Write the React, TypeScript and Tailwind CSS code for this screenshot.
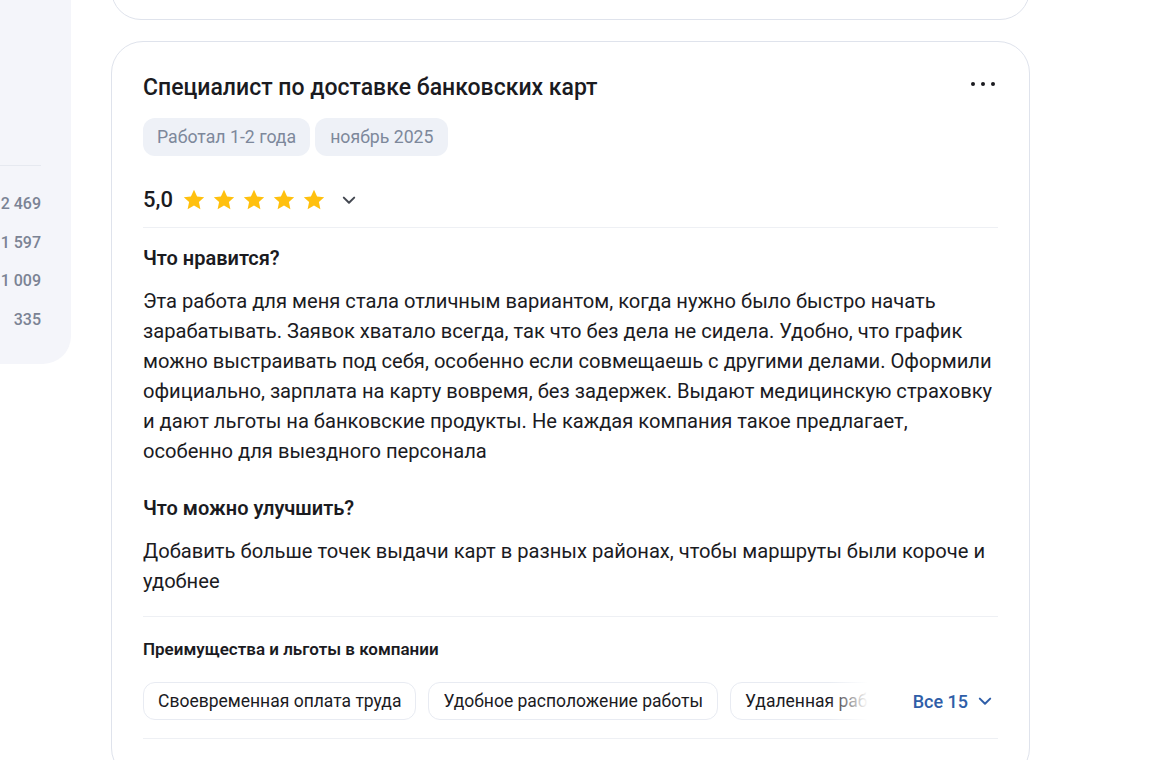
import React from 'react';

const counts = ['2 469', '1 597', '1 009', '335'];
const benefits = ['Своевременная оплата труда', 'Удобное расположение работы', 'Удаленная работа', 'Гибкий график'];

const Star: React.FC = () => (
    <svg width="24" height="24" viewBox="0 0 24 24" className="shrink-0">
        <path d="M12 1.8l3.1 6.6 7.1.8-5.3 4.9 1.5 7.1L12 17.6l-6.4 3.6 1.5-7.1L1.8 9.2l7.1-.8z" fill="#ffc00e" />
    </svg>
);

const Chevron: React.FC<{ className?: string }> = ({ className }) => (
    <svg width="14" height="14" viewBox="0 0 14 14" className={className}>
        <path d="M1.8 4.6l5.2 5.2 5.2-5.2" fill="none" stroke="currentColor" strokeWidth="2" strokeLinecap="round" strokeLinejoin="round" />
    </svg>
);

const App: React.FC = () => {
    return (
        <div className="min-h-[760px] w-[1173px] bg-white flex items-start overflow-hidden font-['Roboto',sans-serif] text-[#1b1b1f]">
            {/* sidebar stub */}
            <div className="w-[71px] shrink-0 -mt-[40px] h-[404px] bg-[#f4f5fa] rounded-r-[28px] pr-[30px] pt-[205px]">
                <div className="h-px bg-[#e6e9f0]" />
                <div className="flex flex-col items-end pt-[26px] gap-[14.5px]">
                    {counts.map((c) => (
                        <div key={c} className="text-[16px] leading-[24px] font-medium text-[#7b8394] whitespace-nowrap">{c}</div>
                    ))}
                </div>
            </div>

            <div className="ml-[40px] w-[919px] shrink-0 flex flex-col">
                <div className="-mt-[40px] h-[60px] border border-[#dfe3ec] rounded-[32px] bg-white" />

                <div className="mt-[21px] border border-[#dfe3ec] rounded-[32px] bg-white px-[31px] pt-[32px]">
                    <div className="flex items-start justify-between">
                        <h2 className="text-[23px] leading-[28px] font-medium">Специалист по доставке банковских карт</h2>
                        <div className="flex gap-[6px] mt-[8px] mr-[3px]">
                            <span className="w-[4px] h-[4px] rounded-full bg-[#1b1b1f]" />
                            <span className="w-[4px] h-[4px] rounded-full bg-[#1b1b1f]" />
                            <span className="w-[4px] h-[4px] rounded-full bg-[#1b1b1f]" />
                        </div>
                    </div>

                    <div className="flex gap-[5px] mt-[16px]">
                        <span className="h-[38px] px-[14px] flex items-center rounded-[12px] bg-[#eef1f7] text-[17.7px] text-[#7d889b]">Работал 1-2 года</span>
                        <span className="h-[38px] px-[15px] flex items-center rounded-[12px] bg-[#eef1f7] text-[17.7px] text-[#7d889b]">ноябрь 2025</span>
                    </div>

                    <div className="flex items-center mt-[26px] h-[36px]">
                        <span className="text-[22px] font-medium leading-[28px] mr-[9px]">5,0</span>
                        <div className="flex gap-[6px]">
                            <Star /><Star /><Star /><Star /><Star />
                        </div>
                        <Chevron className="ml-[16px] text-[#444851]" />
                    </div>

                    <div className="h-px bg-[#eef0f4] mt-[9px]" />

                    <h3 className="mt-[17px] text-[20px] leading-[26px] font-semibold">Что нравится?</h3>
                    <p className="mt-[15px] pr-[4px] text-[20.15px] leading-[30px]">
                        Эта работа для меня стала отличным вариантом, когда нужно было быстро начать зарабатывать. Заявок хватало всегда, так что без дела не сидела. Удобно, что график можно выстраивать под себя, особенно если совмещаешь с другими делами. Оформили официально, зарплата на карту вовремя, без задержек. Выдают медицинскую страховку и дают льготы на банковские продукты. Не каждая компания такое предлагает, особенно для выездного персонала
                    </p>

                    <h3 className="mt-[29px] text-[20px] leading-[26px] font-semibold">Что можно улучшить?</h3>
                    <p className="mt-[15px] pr-[4px] text-[20.15px] leading-[30px]">
                        Добавить больше точек выдачи карт в разных районах, чтобы маршруты были короче и удобнее
                    </p>

                    <div className="h-px bg-[#eef0f4] mt-[20px]" />

                    <h4 className="mt-[21px] text-[17px] leading-[22px] font-semibold">Преимущества и льготы в компании</h4>

                    <div className="flex items-center mt-[22px]">
                        <div className="relative w-[725px] shrink-0 overflow-hidden">
                            <div className="flex gap-[12px] w-max">
                                {benefits.map((b) => (
                                    <span key={b} className="h-[38px] px-[14px] flex items-center rounded-[12px] border border-[#e8ebf2] text-[17.5px] whitespace-nowrap">{b}</span>
                                ))}
                            </div>
                            <div className="absolute right-0 top-0 h-full w-[40px] bg-gradient-to-r from-white/0 to-white" />
                        </div>
                        <button className="ml-auto mr-[6px] flex items-center gap-[10px] text-[18px] font-medium text-[#2f5ea8]">
                            Все 15
                            <Chevron />
                        </button>
                    </div>

                    <div className="h-px bg-[#eef0f4] mt-[18px]" />
                    <div className="h-[40px]" />
                </div>
            </div>
        </div>
    );
};

export default App;
